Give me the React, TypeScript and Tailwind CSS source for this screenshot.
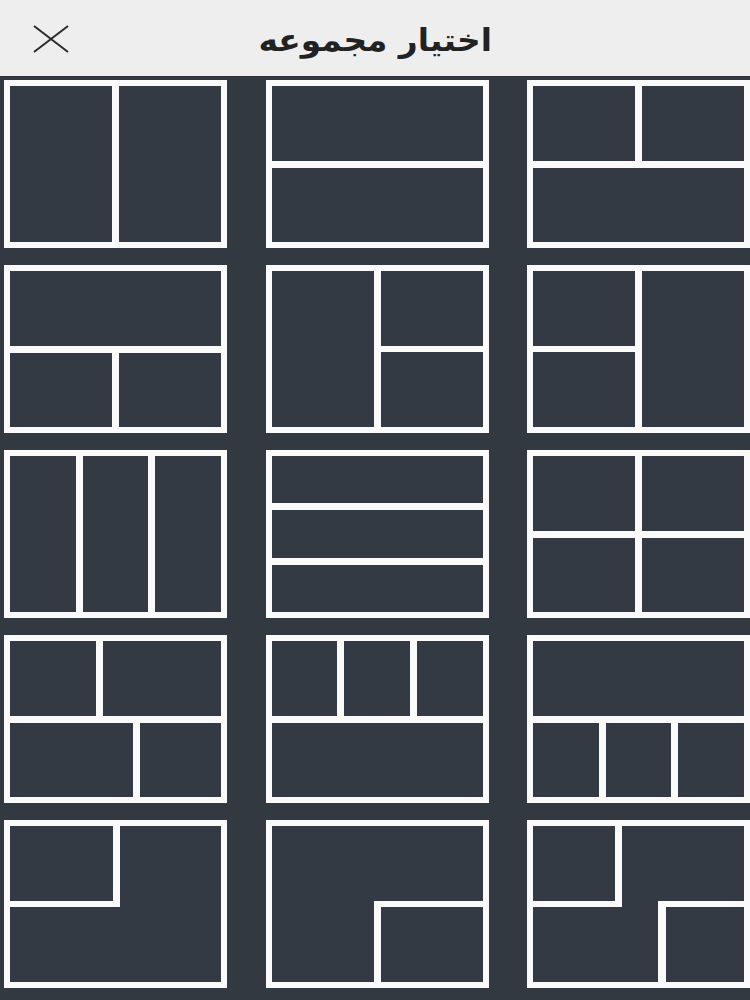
import React from 'react'

const Cell = ({ className = '' }: { className?: string }) => (
  <div className={`bg-[#333a43] ${className}`} />
)

// white frame around each layout thumbnail
const Tile = ({ children, dir = 'row' }: { children: React.ReactNode; dir?: 'row' | 'col' }) => (
  <div
    className={`h-[168px] bg-[#fafafa] p-[6px] flex gap-[7px] ${dir === 'col' ? 'flex-col' : 'flex-row'}`}
  >
    {children}
  </div>
)

const Row = ({ children }: { children: React.ReactNode }) => (
  <div className="flex-1 flex flex-row gap-[7px]">{children}</div>
)
const Col = ({ children }: { children: React.ReactNode }) => (
  <div className="flex-1 flex flex-col gap-[6px]">{children}</div>
)

export default function App() {
  return (
    <div className="w-[750px] h-[1000px] bg-[#323941] overflow-hidden flex flex-col">
      {/* Header */}
      <div className="h-[77px] shrink-0 bg-[#efeeef] relative flex items-center justify-center border-b border-[#2a2f36]">
        <button className="absolute left-[33px] top-[25px]">
          <svg width="36" height="28" viewBox="0 0 36 28" fill="none" stroke="#2b2b2b" strokeWidth="2">
            <line x1="1" y1="1" x2="35" y2="27" />
            <line x1="35" y1="1" x2="1" y2="27" />
          </svg>
        </button>
        <h1
          dir="rtl"
          className="text-[31px] font-bold text-[#222] leading-none pt-[4px] scale-x-[1.06]"
          style={{ fontFamily: '"DejaVu Sans", "Noto Sans", sans-serif' }}
        >
          اختيار مجموعه
        </h1>
      </div>

      {/* Layout grid */}
      <div className="grid grid-cols-3 gap-x-[38.5px] gap-y-[17px] pl-[4px] pt-[3px]">
        {/* row 1 */}
        <Tile>
          <Cell className="flex-1" />
          <Cell className="flex-1" />
        </Tile>
        <Tile dir="col">
          <Cell className="flex-1" />
          <Cell className="flex-1" />
        </Tile>
        <Tile dir="col">
          <Row>
            <Cell className="flex-1" />
            <Cell className="flex-1" />
          </Row>
          <Cell className="flex-1" />
        </Tile>

        {/* row 2 */}
        <Tile dir="col">
          <Cell className="flex-1" />
          <Row>
            <Cell className="flex-1" />
            <Cell className="flex-1" />
          </Row>
        </Tile>
        <Tile>
          <Cell className="flex-1" />
          <Col>
            <Cell className="flex-1" />
            <Cell className="flex-1" />
          </Col>
        </Tile>
        <Tile>
          <Col>
            <Cell className="flex-1" />
            <Cell className="flex-1" />
          </Col>
          <Cell className="flex-1" />
        </Tile>

        {/* row 3 */}
        <Tile>
          <Cell className="flex-1" />
          <Cell className="flex-1" />
          <Cell className="flex-1" />
        </Tile>
        <Tile dir="col">
          <Cell className="flex-1" />
          <Cell className="flex-1" />
          <Cell className="flex-1" />
        </Tile>
        <Tile dir="col">
          <Row>
            <Cell className="flex-1" />
            <Cell className="flex-1" />
          </Row>
          <Row>
            <Cell className="flex-1" />
            <Cell className="flex-1" />
          </Row>
        </Tile>

        {/* row 4 */}
        <Tile dir="col">
          <Row>
            <Cell className="w-[86px]" />
            <Cell className="flex-1" />
          </Row>
          <Row>
            <Cell className="flex-1" />
            <Cell className="w-[81px]" />
          </Row>
        </Tile>
        <Tile dir="col">
          <Row>
            <Cell className="flex-1" />
            <Cell className="flex-1" />
            <Cell className="flex-1" />
          </Row>
          <Cell className="flex-1" />
        </Tile>
        <Tile dir="col">
          <Cell className="flex-1" />
          <Row>
            <Cell className="flex-1" />
            <Cell className="flex-1" />
            <Cell className="flex-1" />
          </Row>
        </Tile>

        {/* row 5: L-shaped layouts */}
        <div className="h-[168px] border-[6px] border-[#fafafa] bg-[#333a43] flex flex-col">
          <div className="w-[110px] h-[81px] border-r-[7px] border-b-[6px] border-[#fafafa]" />
        </div>
        <div className="h-[168px] border-[6px] border-[#fafafa] bg-[#333a43] flex flex-col justify-end items-end">
          <div className="w-[109px] h-[81px] border-l-[7px] border-t-[6px] border-[#fafafa]" />
        </div>
        <div className="h-[168px] border-[6px] border-[#fafafa] bg-[#333a43] flex flex-col">
          <div className="shrink-0 w-[89px] h-[81px] border-r-[7px] border-b-[6px] border-[#fafafa]" />
          <div className="shrink-0 self-end -mt-[6px] w-[86px] h-[81px] border-l-[8px] border-t-[6px] border-[#fafafa]" />
        </div>
      </div>
    </div>
  )
}
